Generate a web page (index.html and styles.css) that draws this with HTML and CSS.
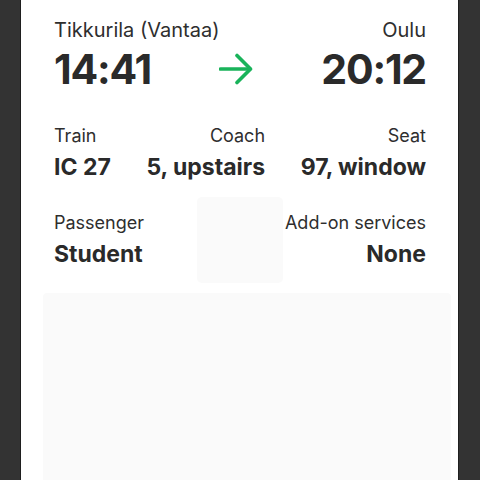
FILE: index.html
```html
<!DOCTYPE html>
<html lang="en">
<head>
<meta charset="utf-8">
<title>Ticket</title>
<link rel="stylesheet" href="styles.css">
</head>
<body>
<div class="page">
  <main class="card">
    <div class="row names">
      <span class="label">Tikkurila (Vantaa)</span>
      <span class="label">Oulu</span>
    </div>
    <div class="row times">
      <span class="time">14:41</span>
      <svg class="arrow" width="34" height="32" viewBox="0 0 34 32" aria-hidden="true">
        <path d="M1.5 16 H31" fill="none" stroke="#19b35a" stroke-width="3.6" stroke-linecap="round"/>
        <path d="M18 2.5 L31.5 16 L18 29.5" fill="none" stroke="#19b35a" stroke-width="3.6" stroke-linecap="round" stroke-linejoin="round"/>
      </svg>
      <span class="time">20:12</span>
    </div>

    <div class="row details">
      <div class="field">
        <div class="label small">Train</div>
        <div class="value">IC 27</div>
      </div>
      <div class="field right">
        <div class="label small">Coach</div>
        <div class="value">5, upstairs</div>
      </div>
      <div class="field right">
        <div class="label small">Seat</div>
        <div class="value">97, window</div>
      </div>
    </div>

    <div class="extras">
      <div class="field">
        <div class="label small">Passenger</div>
        <div class="value">Student</div>
      </div>
      <div class="placeholder"></div>
      <div class="field right">
        <div class="label small">Add-on services</div>
        <div class="value">None</div>
      </div>
    </div>

    <div class="code-area"></div>
  </main>
</div>
</body>
</html>
```

FILE: styles.css
```css
html, body {
  margin: 0;
  padding: 0;
  height: 100%;
  overflow: hidden;
}

body {
  background: #333333;
  font-family: Inter, "Noto Sans", "Liberation Sans", sans-serif;
  color: #2a2a2a;
}

.page {
  padding: 0 22px 0 21px;
  height: 100%;
}

.card {
  background: #ffffff;
  height: 100%;
  box-shadow: -1px 0 0 #1f1f1f, 1px 0 0 #1f1f1f;
  padding: 18px 32px 0 33px;
  display: flex;
  flex-direction: column;
  box-sizing: border-box;
}

.row {
  display: flex;
  justify-content: space-between;
}

.label {
  font-size: 20px;
  line-height: 24px;
  font-weight: 400;
  color: #2e2e2e;
}

.times {
  margin-top: 3px;
  align-items: center;
}

.time {
  font-size: 41px;
  line-height: 48px;
  font-weight: 700;
  letter-spacing: -1.2px;
}

.arrow {
  display: block;
}

.details {
  margin-top: 32px;
}

.field {
  display: flex;
  flex-direction: column;
}

.field.right {
  text-align: right;
}

.label.small {
  font-size: 18px;
  line-height: 22px;
}

.value {
  margin-top: 6px;
  font-size: 23px;
  line-height: 28px;
  font-weight: 700;
}

.extras {
  margin-top: 16px;
  display: grid;
  grid-template-columns: 1fr auto 1fr;
  align-items: center;
}

.placeholder {
  width: 86px;
  height: 86px;
  border-radius: 5px;
  background: #fafafa;
}

.code-area {
  margin: 10px -25px 0 -11px;
  flex: 1;
  background: #fafafa;
  border-radius: 4px 4px 0 0;
}
```
